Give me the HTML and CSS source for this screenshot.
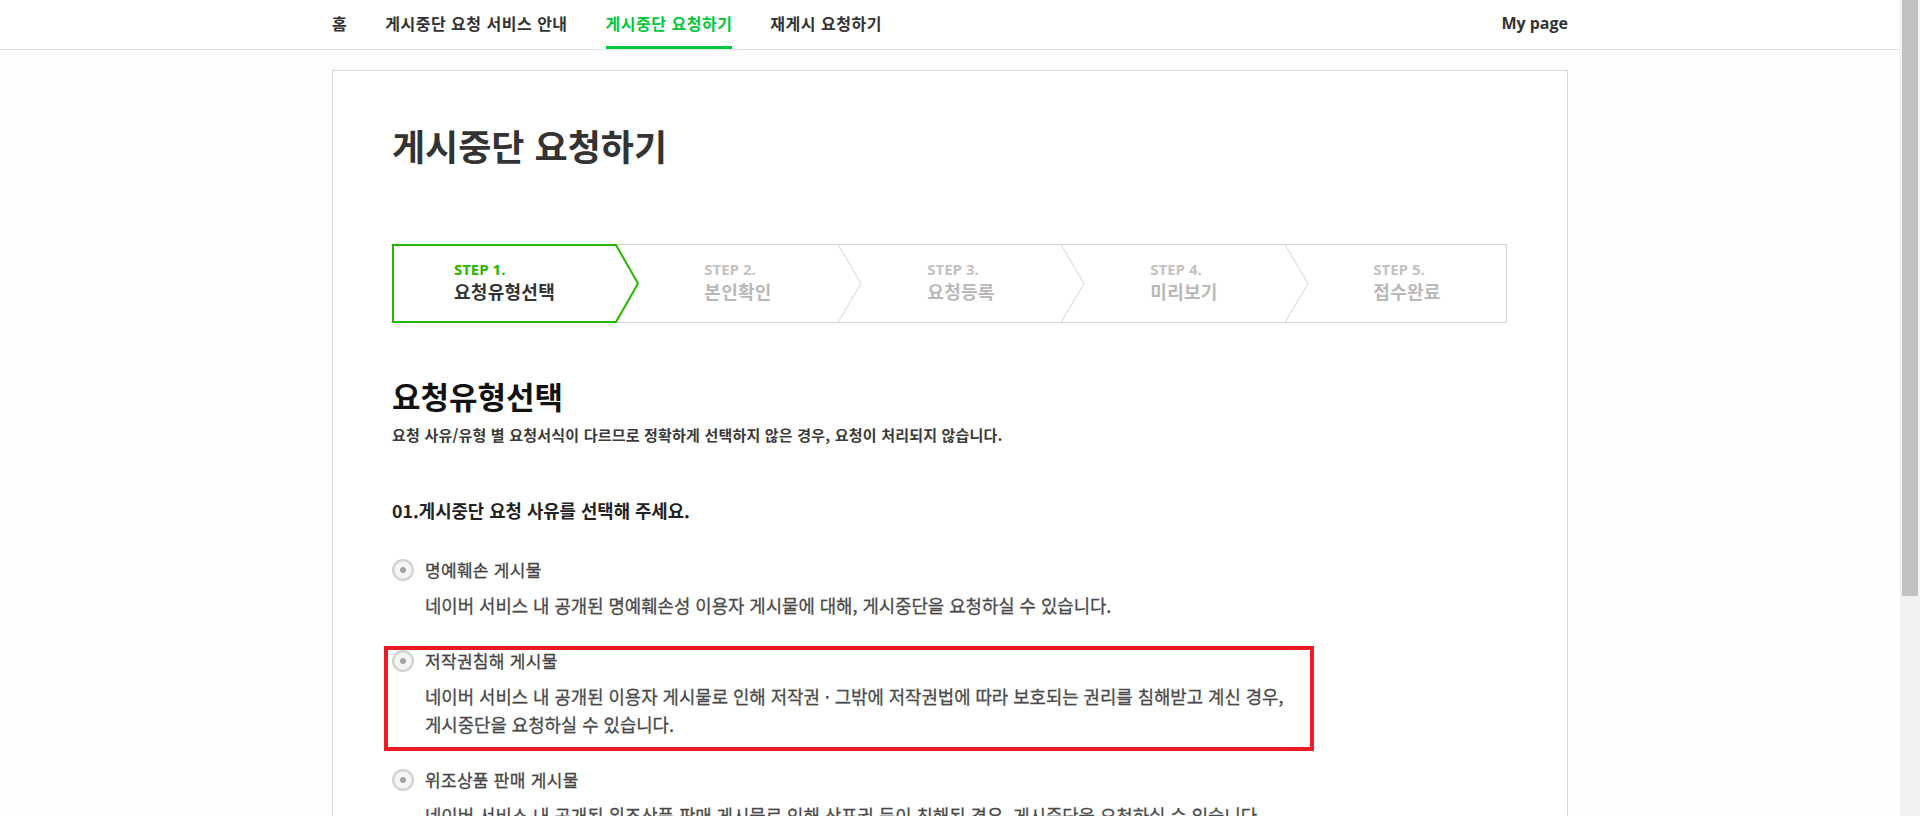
FILE: index.html
```html
<!DOCTYPE html>
<html lang="ko">
<head>
<meta charset="utf-8">
<title>게시중단 요청하기</title>
<link rel="stylesheet" href="styles.css">
</head>
<body>
<header class="gnb">
  <div class="gnb-inner">
    <nav class="gnb-menu">
      <a class="gnb-item">홈</a>
      <a class="gnb-item">게시중단 요청 서비스 안내</a>
      <a class="gnb-item is-active">게시중단 요청하기</a>
      <a class="gnb-item">재게시 요청하기</a>
    </nav>
    <a class="gnb-mypage">My page</a>
  </div>
</header>
<main class="container">
  <section class="card">
    <h1 class="page-title">게시중단 요청하기</h1>

    <div class="steps">
      <svg class="steps-frame" width="1115" height="79" viewBox="0 0 1115 79" aria-hidden="true">
        <rect x="0.5" y="0.5" width="1114" height="78" fill="#fff" stroke="#d4d4d4" stroke-width="1"/>
        <polyline points="446,0.5 469,39.5 446,78.5" fill="none" stroke="#d4d4d4" stroke-width="1"/>
        <polyline points="669,0.5 692,39.5 669,78.5" fill="none" stroke="#d4d4d4" stroke-width="1"/>
        <polyline points="893,0.5 916,39.5 893,78.5" fill="none" stroke="#d4d4d4" stroke-width="1"/>
        <polygon points="1,1 224,1 246,39.5 224,78 1,78" fill="#fff" stroke="#26b600" stroke-width="2"/>
      </svg>
      <ol class="step-list">
        <li class="step is-current"><span class="step-text"><span class="step-num">STEP 1.</span><span class="step-name">요청유형선택</span></span></li>
        <li class="step"><span class="step-text"><span class="step-num">STEP 2.</span><span class="step-name">본인확인</span></span></li>
        <li class="step"><span class="step-text"><span class="step-num">STEP 3.</span><span class="step-name">요청등록</span></span></li>
        <li class="step"><span class="step-text"><span class="step-num">STEP 4.</span><span class="step-name">미리보기</span></span></li>
        <li class="step"><span class="step-text"><span class="step-num">STEP 5.</span><span class="step-name">접수완료</span></span></li>
      </ol>
    </div>

    <h2 class="section-title">요청유형선택</h2>
    <p class="section-desc">요청 사유/유형 별 요청서식이 다르므로 정확하게 선택하지 않은 경우, 요청이 처리되지 않습니다.</p>

    <h3 class="question">01.게시중단 요청 사유를 선택해 주세요.</h3>

    <ul class="options">
      <li class="option">
        <div class="option-head"><span class="radio"></span><span class="option-label">명예훼손 게시물</span></div>
        <p class="option-desc">네이버 서비스 내 공개된 명예훼손성 이용자 게시물에 대해, 게시중단을 요청하실 수 있습니다.</p>
      </li>
      <li class="option is-highlighted">
        <div class="option-head"><span class="radio"></span><span class="option-label">저작권침해 게시물</span></div>
        <p class="option-desc">네이버 서비스 내 공개된 이용자 게시물로 인해 저작권 · 그밖에 저작권법에 따라 보호되는 권리를 침해받고 계신 경우,<br>게시중단을 요청하실 수 있습니다.</p>
      </li>
      <li class="option">
        <div class="option-head"><span class="radio"></span><span class="option-label">위조상품 판매 게시물</span></div>
        <p class="option-desc">네이버 서비스 내 공개된 위조상품 판매 게시물로 인해 상표권 등이 침해된 경우, 게시중단을 요청하실 수 있습니다.</p>
      </li>
    </ul>
  </section>
</main>
<div class="scrollbar" aria-hidden="true"><div class="scrollbar-thumb"></div></div>
</body>
</html>
```

FILE: styles.css
```css
body {
  margin: 0;
  padding-right: 20px;
  background: #fdfdfd;
  font-family: "Noto Sans CJK KR", "Noto Sans", sans-serif;
  color: #333;
}

/* ---------- window scrollbar ---------- */
.scrollbar {
  position: fixed;
  top: 0;
  right: 0;
  width: 20px;
  height: 100vh;
  background: #f1f1f1;
}
.scrollbar-thumb {
  margin: 0 2px;
  height: 596px;
  background: #c1c1c1;
}

/* ---------- header ---------- */
.gnb {
  background: #fff;
  border-bottom: 1px solid #e4e4e4;
}
.gnb-inner {
  width: 1236px;
  margin: 0 auto;
  display: flex;
  justify-content: space-between;
  align-items: flex-start;
  height: 49px;
}
.gnb-menu {
  display: flex;
  gap: 38px;
}
.gnb-item {
  display: block;
  box-sizing: border-box;
  height: 49px;
  line-height: 46px;
  padding-bottom: 3px;
  font-size: 16px;
  font-weight: 700;
  letter-spacing: 0.5px;
  color: #333;
  cursor: pointer;
}
.gnb-item.is-active {
  color: #00c73c;
  padding-bottom: 0;
  border-bottom: 3px solid #00c73c;
}
.gnb-mypage {
  display: block;
  line-height: 46px;
  font-family: "Open Sans", "Noto Sans", sans-serif;
  font-size: 16px;
  font-weight: 700;
  color: #333;
  cursor: pointer;
}

/* ---------- card ---------- */
.container {
  width: 1236px;
  margin: 20px auto;
}
.card {
  box-sizing: border-box;
  min-height: 1027px;
  background: #fff;
  border: 1px solid #d7d7d7;
  padding: 54px 60px 0 59px;
}
.page-title {
  margin: 0;
  font-size: 36px;
  line-height: 40px;
  font-weight: 700;
  color: #333;
}

/* ---------- steps ---------- */
.steps {
  position: relative;
  width: 1115px;
  height: 79px;
  margin-top: 79px;
}
.steps-frame {
  position: absolute;
  top: 0;
  left: 0;
  display: block;
}
.step-list {
  position: relative;
  list-style: none;
  margin: 0;
  padding: 0;
  height: 100%;
  display: grid;
  grid-template-columns: repeat(5, 223px);
}
.step {
  display: flex;
  justify-content: center;
  align-items: flex-start;
  padding-top: 15px;
  padding-left: 23px;
}
.step.is-current {
  padding-left: 2px;
}
.step-text {
  display: flex;
  flex-direction: column;
  align-items: flex-start;
}
.step-num {
  font-family: "Open Sans", "Noto Sans", sans-serif;
  font-size: 15px;
  line-height: 20px;
  font-weight: 700;
  color: #c2c2c2;
}
.step-name {
  font-size: 18px;
  line-height: 24px;
  font-weight: 700;
  letter-spacing: 0.3px;
  color: #b8b8b8;
}
.step.is-current .step-num {
  color: #26b600;
}
.step.is-current .step-name {
  color: #333;
}

/* ---------- section ---------- */
.section-title {
  margin: 55px 0 0;
  font-size: 31px;
  line-height: 36px;
  font-weight: 700;
  color: #111;
}
.section-desc {
  margin: 11px 0 0;
  font-size: 15px;
  line-height: 20px;
  font-weight: 700;
  letter-spacing: 0.2px;
  color: #3a3a3a;
}
.question {
  margin: 53px 0 0;
  font-size: 17.8px;
  line-height: 24px;
  font-weight: 700;
  color: #222;
}

/* ---------- options ---------- */
.options {
  list-style: none;
  margin: 36px 0 0;
  padding: 0;
}
.option {
  margin-bottom: 30px;
}
.option.is-highlighted {
  position: relative;
}
.option.is-highlighted::after {
  content: "";
  position: absolute;
  top: -3px;
  left: -8px;
  width: 930px;
  height: 105px;
  box-sizing: border-box;
  border: 4px solid #ed1c24;
  pointer-events: none;
}
.option-head {
  display: flex;
  align-items: center;
  gap: 11px;
  height: 24px;
}
.radio {
  flex: none;
  width: 22px;
  height: 22px;
  box-sizing: border-box;
  border-radius: 50%;
  border: 2px solid #d2d2d2;
  box-shadow: inset 0 0 1px 1px #e6e6e6;
  background: radial-gradient(circle at center, #a2a2a2 0, #a2a2a2 2.6px, #f4f4f4 3.4px, #fbfbfb 100%);
}
.option-label {
  font-size: 17px;
  line-height: 24px;
  letter-spacing: 0.3px;
  color: #444;
  -webkit-text-stroke: 0.3px #444;
}
.option-desc {
  margin: 9px 0 0 33px;
  font-size: 17.8px;
  line-height: 28px;
  color: #4a4a4a;
  -webkit-text-stroke: 0.3px #4a4a4a;
}
```
